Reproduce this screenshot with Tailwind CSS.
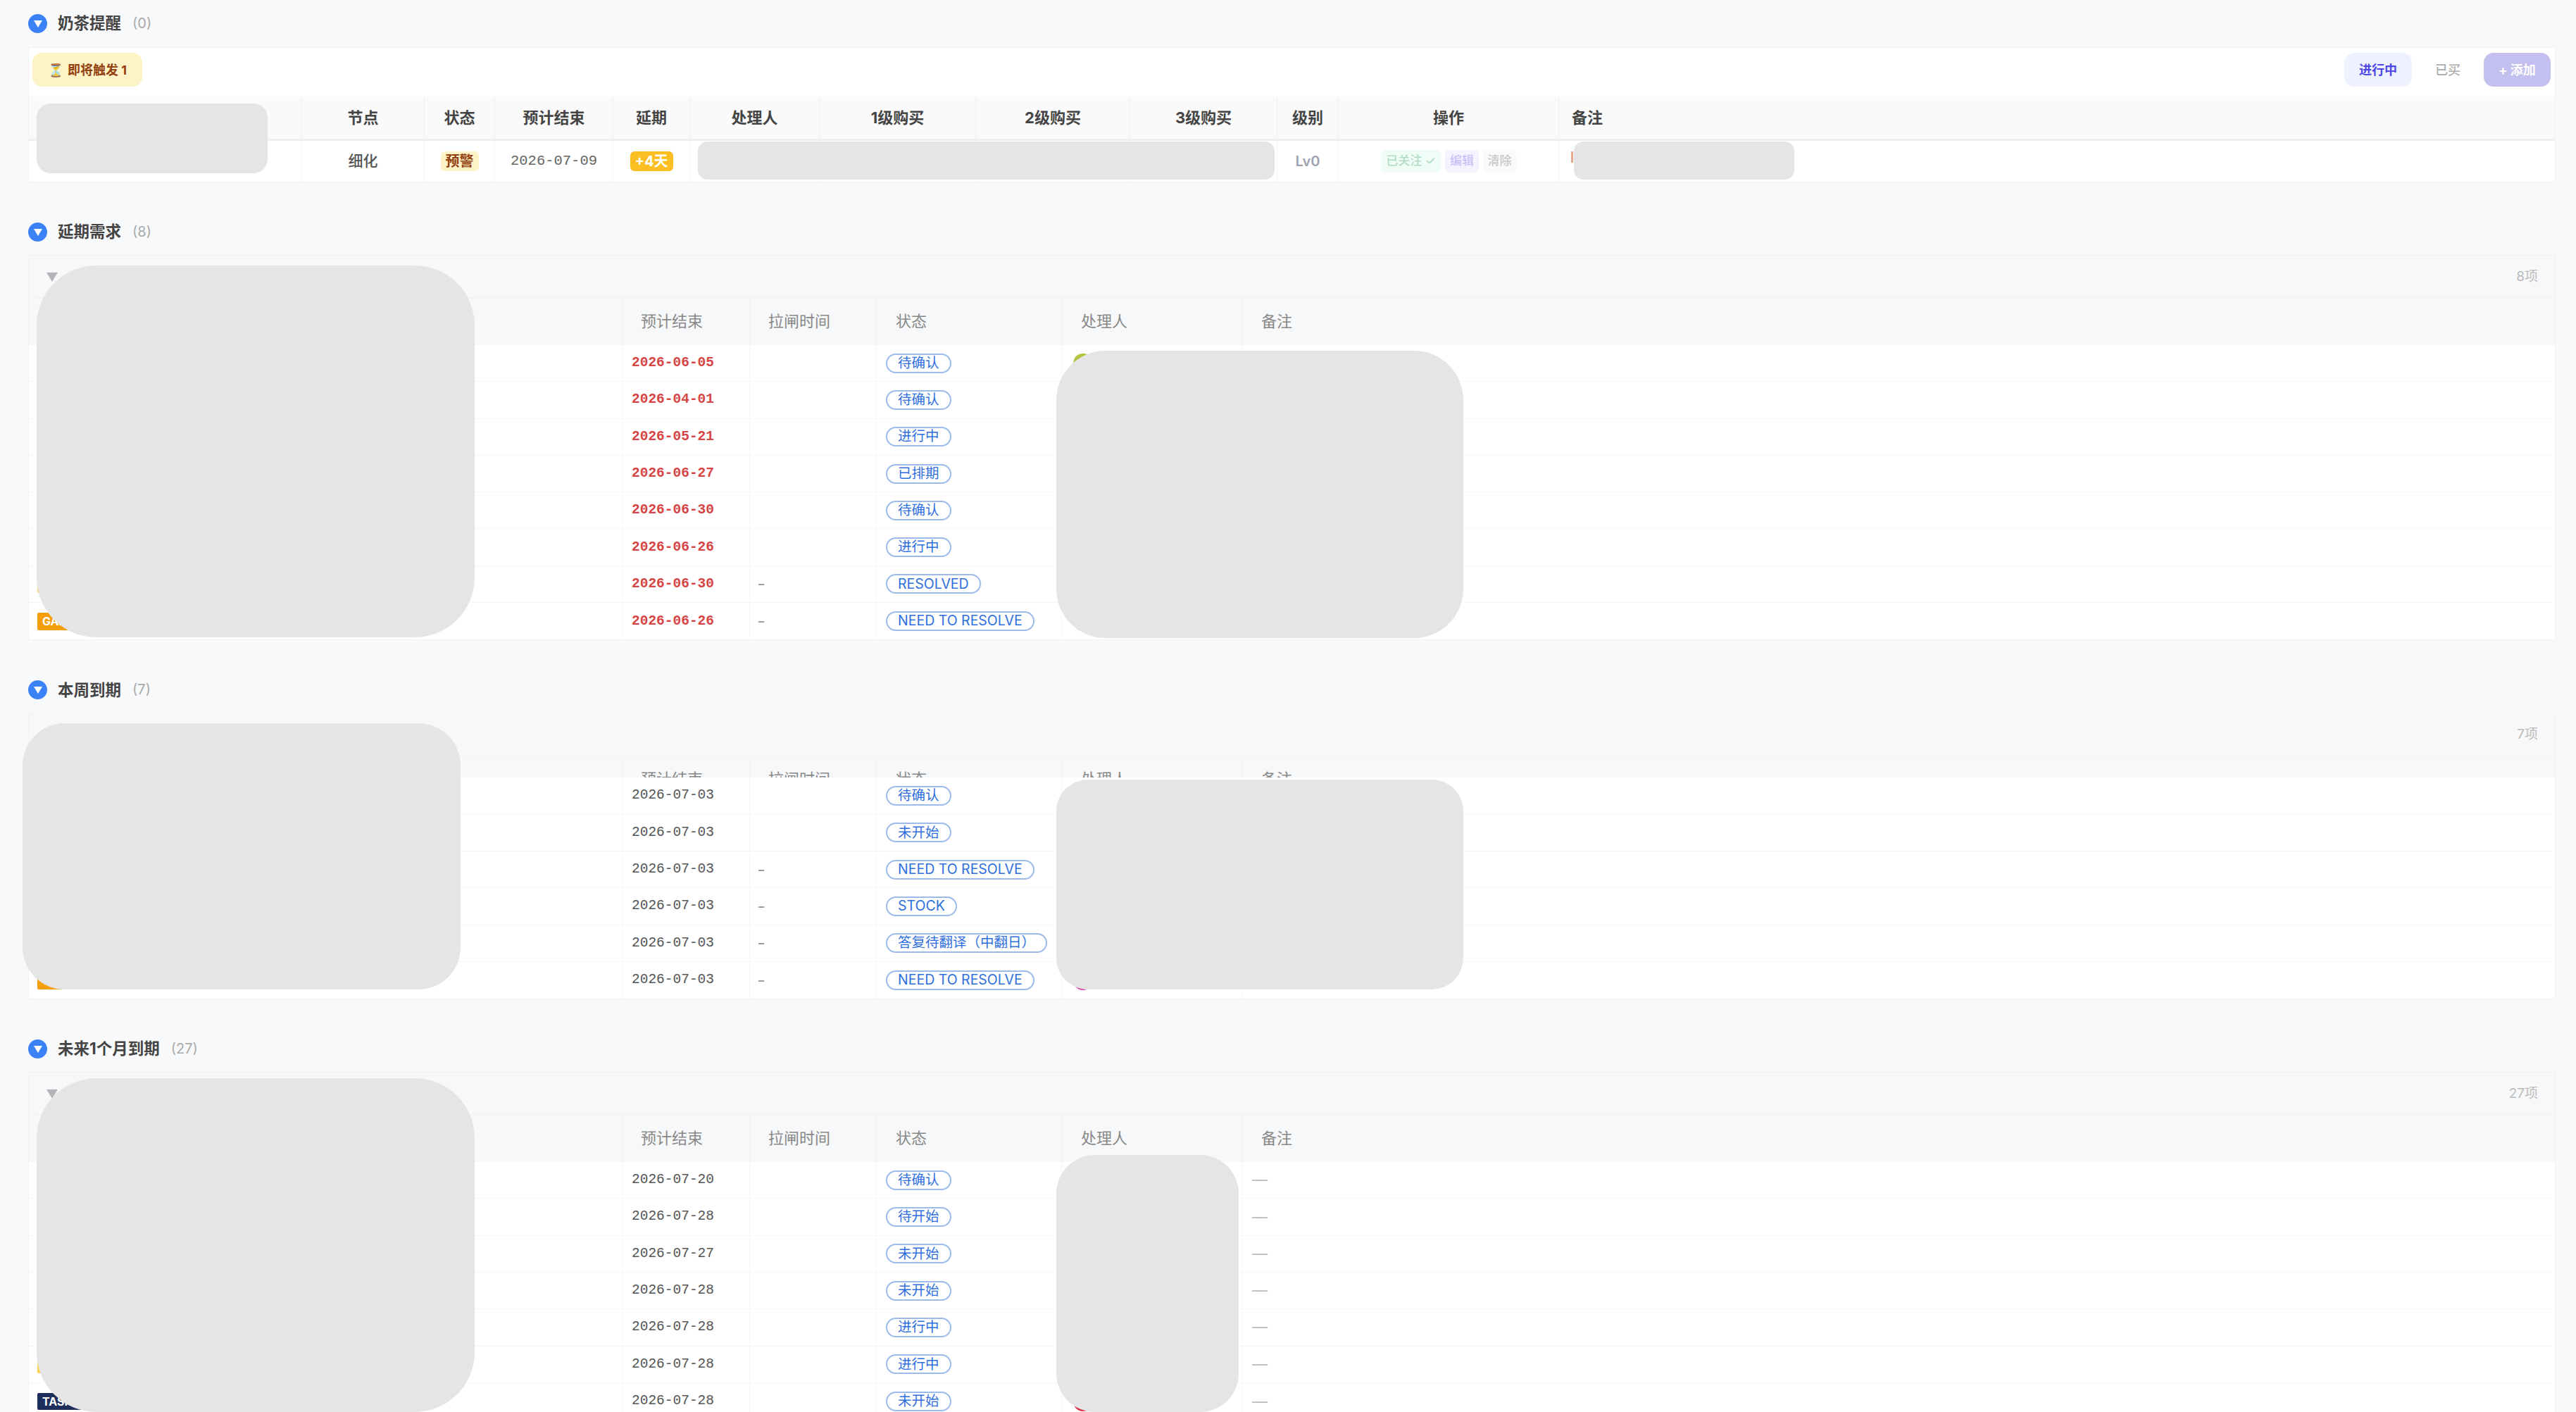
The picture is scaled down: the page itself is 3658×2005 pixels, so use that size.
<!DOCTYPE html>
<html lang="zh-CN">
<head>
    <meta charset="UTF-8">
    <title>需求看板</title>
    <script src="https://cdn.jsdelivr.net/npm/@tailwindcss/browser@4"></script>
</head>
<body class="bg-[#f8f9fb] font-['Inter','Noto_Sans_CJK_SC',sans-serif] text-[#444] overflow-hidden">
<div class="relative h-[2005px] overflow-hidden pt-4 pl-10 pr-[29px]">

    <!-- 奶茶提醒 -->
    <section class="mb-[53px]">
        <div class="h-[34px] mb-[17px] flex items-center">
            <span class="w-[27px] h-[27px] rounded-full bg-[#3b82f6] flex items-center justify-center mr-[15px]"><span class="w-0 h-0 border-x-[6px] border-x-transparent border-t-[10px] border-t-white mt-[2px]"></span></span>
            <h2 class="text-[22.5px] font-bold">奶茶提醒</h2>
            <span class="ml-[16px] text-[20px] text-[#aaa]">(0)</span>
        </div>
        <div class="bg-white border border-[#f1f2f4]">
            <div class="h-[69px] flex items-start justify-between pt-[7px] pl-[5px] pr-[6px]">
                <span class="h-[48px] w-[156px] rounded-[14px] bg-[#fef3c7] text-[#92400e] text-[18px] font-bold flex items-center justify-center gap-[6px]">⏳<span>即将触发 1</span></span>
                <div class="flex items-center">
                    <span class="h-[48px] w-[96px] rounded-[14px] bg-[#eef2ff] text-[#4f46e5] text-[18px] font-bold flex items-center justify-center">进行中</span>
                    <span class="w-[102px] text-[#aaa] text-[18px] font-medium text-center">已买</span>
                    <span class="h-[48px] w-[95px] rounded-[14px] bg-[#c3bfee] text-white text-[18px] font-bold flex items-center justify-center">+ 添加</span>
                </div>
            </div>
            <div class="grid grid-cols-[388px_174px_100px_168px_109px_184px_222px_219px_209px_87px_313px_1fr] h-[60px] bg-[#fafafa] border-b-[3px] border-[#eeeeee] text-[22px] font-bold text-[#444] box-content">
                <div class="border-r border-[#f1f1f1]"></div>
                <div class="border-r border-[#f1f1f1] flex items-center justify-center">节点</div>
                <div class="border-r border-[#f1f1f1] flex items-center justify-center">状态</div>
                <div class="border-r border-[#f1f1f1] flex items-center justify-center">预计结束</div>
                <div class="border-r border-[#f1f1f1] flex items-center justify-center">延期</div>
                <div class="border-r border-[#f1f1f1] flex items-center justify-center">处理人</div>
                <div class="border-r border-[#f1f1f1] flex items-center justify-center">1级购买</div>
                <div class="border-r border-[#f1f1f1] flex items-center justify-center">2级购买</div>
                <div class="border-r border-[#f1f1f1] flex items-center justify-center">3级购买</div>
                <div class="border-r border-[#f1f1f1] flex items-center justify-center">级别</div>
                <div class="border-r border-[#f1f1f1] flex items-center justify-center">操作</div>
                <div class="flex items-center pl-[18px]">备注</div>
            </div>
            <div class="grid grid-cols-[388px_174px_100px_168px_109px_184px_222px_219px_209px_87px_313px_1fr] h-[58px]">
                <div class="border-r border-[#f6f6f6]"></div>
                <div class="border-r border-[#f6f6f6] flex items-center justify-center text-[21px] font-medium text-[#555]">细化</div>
                <div class="border-r border-[#f6f6f6] flex items-center justify-center"><span class="h-[28px] w-[54px] rounded-[6px] bg-[#fef3c7] text-[#92400e] text-[20px] font-bold flex items-center justify-center">预警</span></div>
                <div class="border-r border-[#f6f6f6] flex items-center justify-center font-['Liberation_Mono',monospace] text-[20.5px] text-[#666]">2026-07-09</div>
                <div class="border-r border-[#f6f6f6] flex items-center justify-center"><span class="h-[28px] w-[61px] rounded-[6px] bg-[#fbbf24] text-white text-[20px] font-bold flex items-center justify-center">+4天</span></div>
                <div class="border-r border-[#f6f6f6]"></div>
                <div class="border-r border-[#f6f6f6]"></div>
                <div class="border-r border-[#f6f6f6]"></div>
                <div class="border-r border-[#f6f6f6]"></div>
                <div class="border-r border-[#f6f6f6] flex items-center justify-center text-[20px] font-semibold text-[#9ca3af]">Lv0</div>
                <div class="border-r border-[#f6f6f6] flex items-center justify-center gap-[6px] text-[17px] font-medium">
                    <span class="h-[32px] w-[85px] rounded-[6px] bg-[#f0fdf6] text-[#b0dcc6] flex items-center justify-center">已关注 ✓</span>
                    <span class="h-[32px] w-[48px] rounded-[6px] bg-[#f5f3ff] text-[#c7c2f5] flex items-center justify-center">编辑</span>
                    <span class="h-[32px] w-[47px] rounded-[6px] bg-[#fafafa] text-[#c8c8c8] flex items-center justify-center">清除</span>
                </div>
                <div class="flex items-start pl-[17px] pt-[15px]"><span class="w-[16px] h-[16px] border-l-[3px] border-[#e8a98c]"></span></div>
            </div>
        </div>
    </section>

    <div id="sections"></div>

    <!-- redacted areas -->
    <div class="absolute bg-[#e5e5e5] left-[52px] top-[147px] w-[328px] h-[99px] rounded-[20px]"></div>
    <div class="absolute bg-[#e5e5e5] left-[991px] top-[201px] w-[819px] h-[54px] rounded-[14px]"></div>
    <div class="absolute bg-[#e5e5e5] left-[2235px] top-[201px] w-[313px] h-[54px] rounded-[14px]"></div>
    <div class="absolute bg-[#e5e5e5] left-[52px] top-[377px] w-[622px] h-[528px] rounded-[85px]"></div>
    <div class="absolute bg-[#e5e5e5] left-[1500px] top-[498px] w-[578px] h-[408px] rounded-[70px]"></div>
    <div class="absolute bg-[#e5e5e5] left-[32px] top-[1027px] w-[622px] h-[378px] rounded-[60px]"></div>
    <div class="absolute bg-[#e5e5e5] left-[1500px] top-[1107px] w-[578px] h-[298px] rounded-[45px]"></div>
    <div class="absolute bg-[#e5e5e5] left-[52px] top-[1531px] w-[622px] h-[474px] rounded-[85px]"></div>
    <div class="absolute bg-[#e5e5e5] left-[1500px] top-[1640px] w-[259px] h-[365px] rounded-[55px]"></div>
</div>

<script>
    const sections = [
        { title: '延期需求', count: 8, overdue: true, rows: [
            ['2026-06-05', '', '待确认', 'lime', ''], ['2026-04-01', '', '待确认', '', ''], ['2026-05-21', '', '进行中', '', ''], ['2026-06-27', '', '已排期', '', ''],
            ['2026-06-30', '', '待确认', '', ''], ['2026-06-26', '', '进行中', '', ''], ['2026-06-30', '–', 'RESOLVED', '', 'yellow'], ['2026-06-26', '–', 'NEED TO RESOLVE', 'yellow', 'GAME']
        ] },
        { title: '本周到期', count: 7, collapsedHead: true, rows: [
            ['2026-07-03', '', '待确认', '', ''], ['2026-07-03', '', '未开始', '', ''], ['2026-07-03', '–', 'NEED TO RESOLVE', '', ''],
            ['2026-07-03', '–', 'STOCK', '', ''], ['2026-07-03', '–', '答复待翻译（中翻日）', '', ''], ['2026-07-03', '–', 'NEED TO RESOLVE', 'pink', 'orange']
        ] },
        { title: '未来1个月到期', count: 27, remark: true, rows: [
            ['2026-07-20', '', '待确认', '', 'yellow'], ['2026-07-28', '', '待开始', '', ''], ['2026-07-27', '', '未开始', '', ''], ['2026-07-28', '', '未开始', '', ''],
            ['2026-07-28', '', '进行中', '', ''], ['2026-07-28', '', '进行中', '', 'yellow'], ['2026-07-28', '', '未开始', 'red', 'TASK']
        ] }
    ];

    const avatarClass = { lime: 'bg-[#b5c23c]', yellow: 'bg-[#e3c94a]', pink: 'bg-[#d946a8]', red: 'bg-[#dc2f4a]' };
    const cols = 'grid grid-cols-[843px_181px_180px_263px_256px_1fr]';

    function tag(kind) {
        if (kind === 'GAME') return '<span class="h-[25px] w-[74px] bg-[#f59e0b] text-white text-[16px] font-bold rounded-[2px] pl-[7px] flex items-center">GAME</span>';
        if (kind === 'TASK') return '<span class="h-[24px] w-[74px] bg-[#1e2f5c] text-white text-[16px] font-bold rounded-[2px] pl-[7px] flex items-center">TASK</span>';
        if (kind === 'orange') return '<span class="h-[25px] w-[74px] bg-[#f59e0b] rounded-[2px]"></span>';
        if (kind === 'yellow') return '<span class="h-[25px] w-[74px] bg-[#fcd34d] rounded-[2px]"></span>';
        return '';
    }

    function row(r, s) {
        const [date, pull, status, avatar, left] = r;
        const dateClass = s.overdue ? 'text-[#d64545] font-bold' : 'text-[#555]';
        return `<div class="${cols} h-[52.3px] border-b border-[#f5f6f8] last:border-b-0 bg-white">
            <div class="border-r border-[#f6f7f9] pl-3 flex items-center">${tag(left)}</div>
            <div class="border-r border-[#f6f7f9] pl-[13px] flex items-center font-['Liberation_Mono',monospace] text-[19.5px] ${dateClass}">${date}</div>
            <div class="border-r border-[#f6f7f9] pl-[12px] flex items-center text-[#999] font-bold text-[16px]">${pull}</div>
            <div class="border-r border-[#f6f7f9] pl-[13px] flex items-center"><span class="h-[28px] px-[15px] rounded-full border-2 border-[#9dbbea] text-[#2f6fdd] text-[19.5px] leading-none flex items-center whitespace-nowrap">${status}</span></div>
            <div class="border-r border-[#f6f7f9] pl-[16px] flex items-center">${avatar ? `<span class="w-[28px] h-[28px] rounded-full ${avatarClass[avatar]}"></span>` : ''}</div>
            <div class="pl-[14px] flex items-center text-[22px] text-[#bbb]">${s.remark ? '—' : ''}</div>
        </div>`;
    }

    document.getElementById('sections').innerHTML = sections.map((s, i) => `
        <section class="${i === sections.length - 1 ? '' : 'mb-[53px]'}">
            <div class="h-[34px] mb-[16px] flex items-center">
                <span class="w-[27px] h-[27px] rounded-full bg-[#3b82f6] flex items-center justify-center mr-[15px]"><span class="w-0 h-0 border-x-[6px] border-x-transparent border-t-[10px] border-t-white mt-[2px]"></span></span>
                <h2 class="text-[22.5px] font-bold">${s.title}</h2>
                <span class="ml-[16px] text-[20px] text-[#aaa]">(${s.count})</span>
            </div>
            <div class="bg-white border border-[#f1f2f4]">
                <div class="h-[61px] bg-[#f7f8fa] border-b border-[#f1f2f4] flex items-center justify-between pl-[25px] pr-[24px]">
                    <span class="w-0 h-0 border-x-[8px] border-x-transparent border-t-[13px] border-t-[#b4b4b8]"></span>
                    <span class="text-[19px] text-[#bbb]">${s.count}项</span>
                </div>
                <div class="${cols} ${s.collapsedHead ? 'h-[30px] overflow-hidden' : 'h-[66px]'} bg-[#f7f8fa] text-[22px] text-[#888] box-border">
                    <div class="border-r border-[#f1f2f4]"></div>
                    <div class="border-r border-[#f1f2f4] pl-[26px] pt-[16px]">预计结束</div>
                    <div class="border-r border-[#f1f2f4] pl-[26px] pt-[16px]">拉闸时间</div>
                    <div class="border-r border-[#f1f2f4] pl-[27px] pt-[16px]">状态</div>
                    <div class="border-r border-[#f1f2f4] pl-[27px] pt-[16px]">处理人</div>
                    <div class="pl-[27px] pt-[16px]">备注</div>
                </div>
                ${s.rows.map(r => row(r, s)).join('')}
            </div>
        </section>`).join('');
</script>
</body>
</html>
